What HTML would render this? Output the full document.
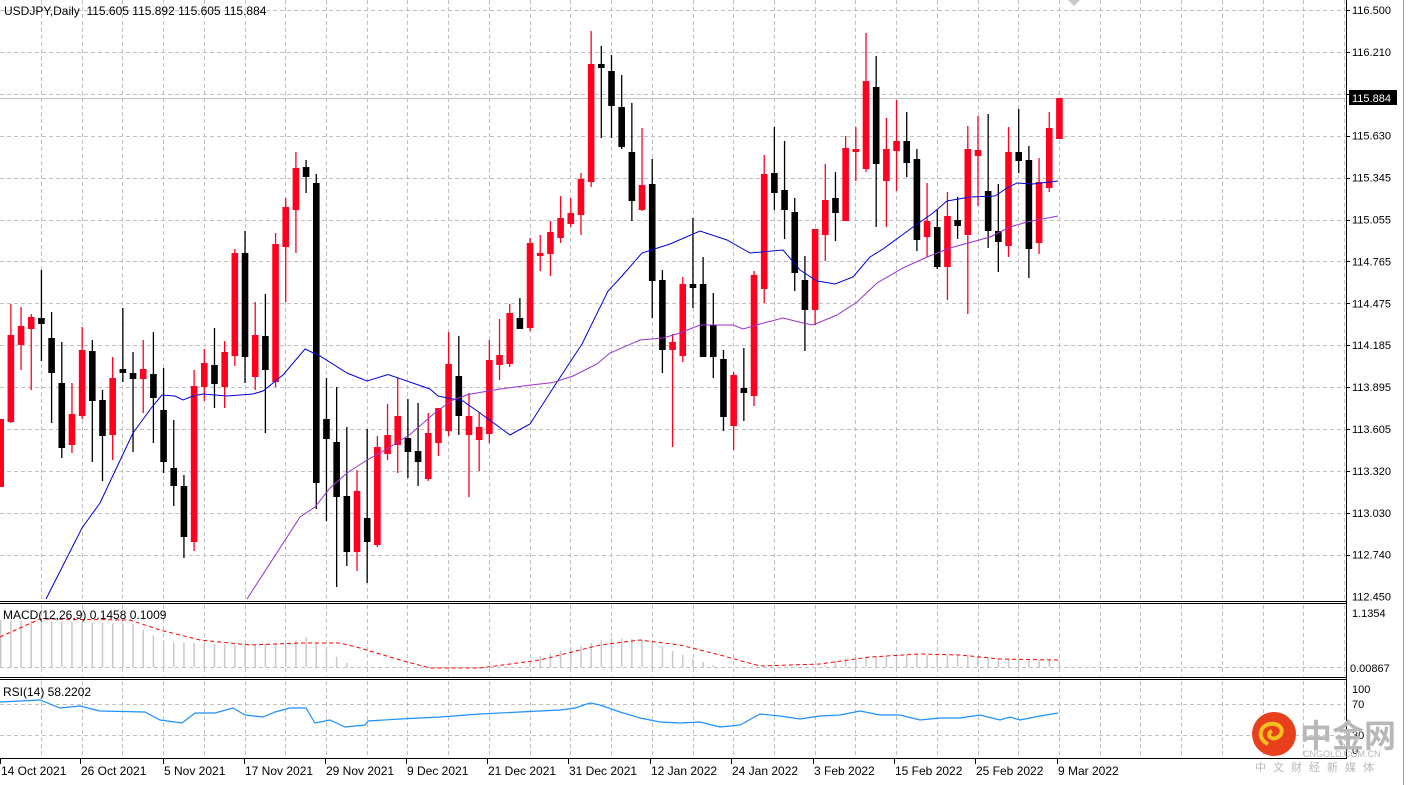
<!DOCTYPE html>
<html><head><meta charset="utf-8"><style>
html,body{margin:0;padding:0;background:#fff;width:1408px;height:785px;overflow:hidden}
svg{display:block}
text{font-family:"Liberation Sans","DejaVu Sans",sans-serif;font-size:11px;fill:#000}
.lb{font-size:12px}
</style></head><body>
<svg id="s" width="1408" height="785" xmlns="http://www.w3.org/2000/svg">
<rect width="1408" height="785" fill="#fff"/>
<g id="grid" stroke="#c0c0c0" stroke-dasharray="4,3" stroke-width="1"></g>
<line x1="0" y1="98.5" x2="1346" y2="98.5" stroke="#c0c0c0"/>
<g id="hist" stroke="#c8c8c8" stroke-width="1.5"></g>
<polyline id="sig" fill="none" stroke="#ff0000" stroke-width="1" stroke-dasharray="4,3" points="0,637 40,619 130,620 160,630 200,640 250,645 300,643 340,643 360,648 400,660 430,668 480,668 540,660 600,645 640,640 680,645 720,655 760,666 820,664 870,657 920,654 960,655 1000,659 1058,660"/>
<polyline fill="none" stroke="#1e90ff" stroke-width="1.2" points="0,702 40,700 60,708 80,706 100,711 145,712 160,720 182,723 195,713 215,713 233,708 245,715 263,717 275,712 290,708 306,708 315,723 330,720 345,727 365,725 368,721 400,719 440,717 480,714 520,712 560,710 575,708 590,703 600,705 620,712 640,718 660,722 680,723 700,722 720,727 740,725 760,714 780,716 800,719 820,716 840,715 860,711 880,715 900,715 920,720 940,718 960,718 980,715 1000,720 1010,717 1020,720 1040,716 1058,713"/>
<g id="cd"></g>
<polyline fill="none" stroke="#0000dd" stroke-width="1" points="46,599 82,528 100,503 133,433 152,407 162,395 175,396 183,400 193,396 203,394 227,396 253,394 263,391 283,375 305,349 320,356 347,373 367,381 388,374.5 430,389 438,396 463,401 480,413 510,435 530,424 557,382 582,344 608,291 622,276 642,253 670,244 700,231 727,240 750,253 783,250 800,270 817,281 835,284 853,277 870,257 883,249 913,227 933,213 947,201 970,197 995,196 1007,188 1017,183 1033,184 1058,181"/>
<polyline fill="none" stroke="#9932cc" stroke-width="1" points="247,599 300,517 315,507 330,488 347,473 367,460 387,449 410,434.5 437,411 453,400 468,394.5 500,389 527,385.5 553,382.5 573,376 597,364 610,353 640,340 663,338 680,333 700,325 733,325 743,329 760,324 783,318 803,323 813,325 837,315 857,302 877,283 903,268 927,257 950,248 990,237 1010,227 1027,222 1058,216"/>
<polygon points="1068,0 1080,0 1074,6" fill="#c8c8c8"/>
<line x1="0" y1="601.5" x2="1346" y2="601.5" stroke="#000" stroke-width="1"/>
<line x1="0" y1="603.5" x2="1346" y2="603.5" stroke="#000" stroke-width="1"/>
<line x1="0" y1="677.5" x2="1346" y2="677.5" stroke="#000" stroke-width="1"/>
<line x1="0" y1="679.5" x2="1346" y2="679.5" stroke="#000" stroke-width="1"/>
<line x1="0" y1="758.5" x2="1346" y2="758.5" stroke="#000" stroke-width="1"/>
<line x1="1346.5" y1="0" x2="1346.5" y2="759" stroke="#000" stroke-width="1"/>
<line x1="1403.5" y1="0" x2="1403.5" y2="785" stroke="#a0a0a0" stroke-width="1"/>
<g id="ticks" stroke="#000"></g>
<text class="lb" x="4" y="15" xml:space="preserve">USDJPY,Daily  115.605 115.892 115.605 115.884</text>
<text class="lb" x="3" y="619">MACD(12,26,9) 0.1458 0.1009</text>
<text class="lb" x="3" y="696">RSI(14) 58.2202</text>
<g id="pl"></g>
<rect x="1349" y="90" width="48" height="15" fill="#000"/>
<text x="1352" y="102" style="fill:#fff">115.884</text>
<text x="1352" y="617">1.1354</text>
<text x="1350" y="672">0.00867</text>
<text x="1352" y="693">100</text>
<text x="1352" y="708">70</text>
<text x="1352" y="739">30</text>
<text x="1352" y="754">0</text>
<g id="dates"></g>
<circle cx="1274" cy="734" r="22" fill="#e8401c"/>
<path d="M1268,744 C1258,740 1258,726 1270,724 C1282,722 1286,734 1276,738 C1270,740 1266,734 1272,731" fill="none" stroke="#f6c020" stroke-width="4"/>
<text x="1300" y="747" style="font-family:'Noto Sans CJK SC',sans-serif;font-size:32px;font-weight:bold;fill:#b8b8b8">中金网</text>
<text x="1303" y="757" style="font-size:9px;fill:#b8b8b8">CNGOLD.COM.CN</text>
<text x="1255" y="771" style="font-family:'Noto Sans CJK SC',sans-serif;font-size:11px;fill:#b8b8b8;letter-spacing:7px">中文财经新媒体</text>
</svg>
<script>
var NS="http://www.w3.org/2000/svg";
function el(p,t,a){var e=document.createElementNS(NS,t);for(var k in a)e.setAttribute(k,a[k]);document.getElementById(p).appendChild(e);return e;}
for(var x=41;x<1346;x+=40.72){var xx=Math.round(x)+0.5;
 el('grid','line',{x1:xx,y1:0,x2:xx,y2:600});el('grid','line',{x1:xx,y1:605,x2:xx,y2:676});el('grid','line',{x1:xx,y1:681,x2:xx,y2:758});}
for(var k=0;k<14;k++){var y=Math.round(10+41.9*k)+0.5;el('grid','line',{x1:0,y1:y,x2:1346,y2:y});
 el('ticks','line',{x1:1346,y1:y,x2:1350,y2:y});}
[[667.5],[704.5],[735.5]].forEach(function(a){el('grid','line',{x1:0,y1:a[0],x2:1346,y2:a[0]});});
var labs=["116.500","116.210","115.920","115.630","115.345","115.055","114.765","114.475","114.185","113.895","113.605","113.320","113.030","112.740","112.450"];
labs.forEach(function(l,k){if(k==2)return;var t=el('pl','text',{x:1352,y:14+41.9*k});t.textContent=l;});
var t2=el('pl','text',{x:1352,y:98});t2.textContent="115.920";
var C=[[419,487,419,487,1],[304,423,335,422,1],[307,370,326,345,1],[314,390,317,329,1],[270,361,318,324,0],[312,423,338,373,0],[342,458,383,448,0],[383,453,414,445,1],[327,419,350,416,1],[340,462,351,401,0],[390,481,400,436,0],[357,460,378,435,1],[308,382,369,373,0],[352,452,373,379,0],[340,413,369,379,1],[332,443,374,398,0],[368,473,410,462,0],[420,506,468,486,0],[475,558,486,537,0],[370,551,386,542,1],[349,401,363,387,1],[328,408,365,384,0],[341,408,352,387,1],[249,366,253,356,1],[231,383,253,357,0],[302,390,335,377,1],[294,433,336,370,0],[233,387,244,382,1],[198,302,207,247,1],[152,253,168,210,1],[160,193,167,177,0],[174,509,183,483,0],[378,521,419,439,0],[387,587,442,497,0],[427,566,496,552,0],[470,571,491,552,1],[429,583,518,542,0],[436,547,447,545,1],[404,460,435,454,1],[378,473,416,445,1],[399,478,438,452,0],[403,486,451,462,0],[413,481,433,479,1],[413,456,408,443,1],[332,436,364,431,1],[336,435,376,416,0],[393,497,416,435,1],[413,471,427,440,1],[340,443,360,434,1],[319,380,355,365,1],[304,367,313,364,1],[298,329,318,329,0],[238,331,243,328,1],[235,271,253,256,1],[221,276,232,254,1],[196,243,218,238,1],[198,227,213,224,1],[173,235,179,215,1],[31,187,64,182,1],[46,138,64,68,0],[55,138,71,106,0],[75,149,107,147,0],[103,221,152,201,0],[128,211,185,210,1],[159,318,184,281,0],[270,373,280,350,0],[334,447,342,350,1],[277,362,284,356,1],[218,308,284,288,0],[257,343,284,357,0],[293,378,325,357,0],[350,431,359,417,0],[372,450,375,426,1],[348,421,388,393,0],[271,406,275,396,1],[155,303,174,289,1],[127,210,173,193,0],[141,239,190,210,0],[198,291,212,273,0],[256,351,280,310,0],[229,325,229,310,1],[164,261,200,235,1],[172,241,198,213,0],[136,221,148,221,1],[127,181,149,152,1],[33,172,81,169,1],[56,227,87,164,0],[118,227,149,181,1],[100,191,141,151,1],[112,177,141,163,0],[149,251,159,240,0],[183,257,221,237,1],[210,269,227,267,0],[192,300,216,267,1],[197,239,220,226,0],[126,314,149,235,1],[116,206,150,156,1],[114,248,191,231,0],[184,272,231,242,0],[127,257,152,246,1],[109,173,152,161,0],[146,278,160,249,0],[158,254,182,243,1],[112,192,128,188,1],[98,139,98,139,1]];
C.forEach(function(c,i){var x=0.7+i*10.18;var col=c[4]?"#ff0020":"#000";
 el('cd','line',{x1:x,y1:c[0],x2:x,y2:c[1],stroke:col,'stroke-width':1.3});
 var h=Math.max(c[3]-c[2],2);el('cd','rect',{x:x-3.3,y:c[2],width:6.6,height:h,fill:col});});
var HP=[[0,620],[133,624],[165,642],[245,645],[290,643],[305,637],[317,643],[337,657],[350,665],[360,667],[520,667],[540,656],[580,646],[610,638],[640,639],[665,648],[690,658],[720,667],[820,667],[840,659],[900,655],[960,655],[1000,659],[1060,660]];
function hp(x){for(var j=0;j<HP.length-1;j++){if(x>=HP[j][0]&&x<=HP[j+1][0]){var f=(x-HP[j][0])/(HP[j+1][0]-HP[j][0]);return HP[j][1]+f*(HP[j+1][1]-HP[j][1]);}}return 667;}
for(var i=0;i<105;i++){var x=0.7+i*10.18;var t=hp(x);if(t<666)el('hist','line',{x1:x,y1:667,x2:x,y2:t});}
var D=[["14 Oct 2021",0],["26 Oct 2021",80],["5 Nov 2021",163],["17 Nov 2021",244],["29 Nov 2021",325],["9 Dec 2021",406],["21 Dec 2021",487],["31 Dec 2021",568],["12 Jan 2022",650],["24 Jan 2022",731],["3 Feb 2022",813],["15 Feb 2022",894],["25 Feb 2022",975],["9 Mar 2022",1057]];
D.forEach(function(d){var tt=el('dates','text',{x:d[1]+1,y:775,'class':'lb'});tt.textContent=d[0];el('ticks','line',{x1:d[1]+0.5,y1:759,x2:d[1]+0.5,y2:764});});
</script>
</body></html>
